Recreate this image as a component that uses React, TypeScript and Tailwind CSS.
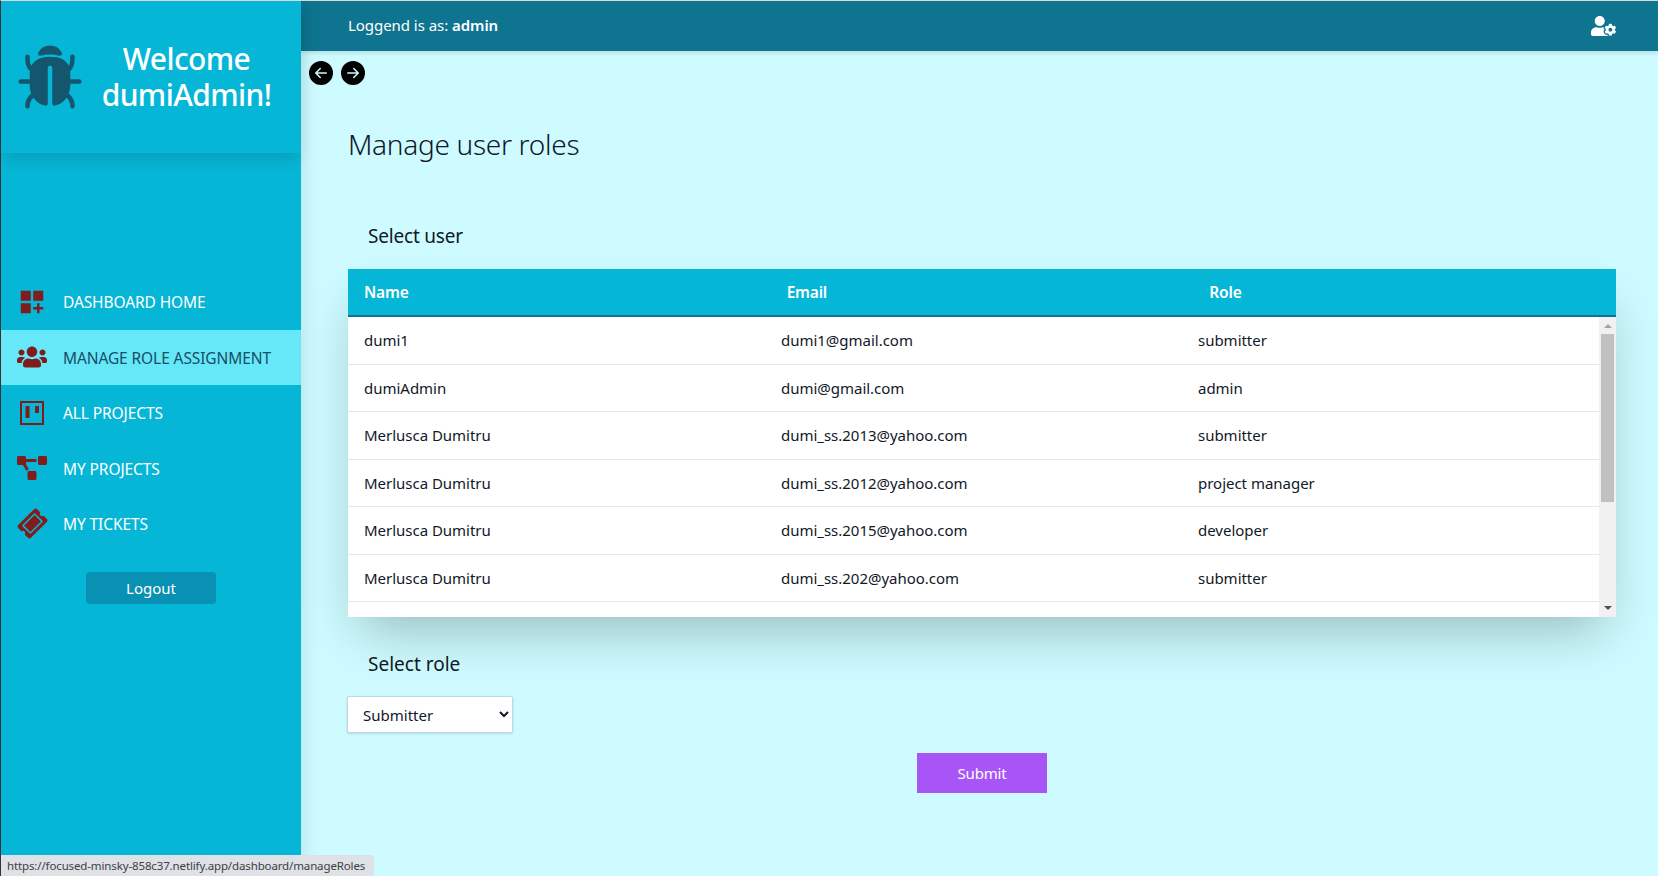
import { FaUsers, FaProjectDiagram, FaTicketAlt, FaUserCog } from "react-icons/fa";
import { MdDashboardCustomize } from "react-icons/md";
import { IoBug } from "react-icons/io5";
import { BsArrowLeftCircleFill, BsArrowRightCircleFill } from "react-icons/bs";

const nav = [
  { label: "DASHBOARD HOME", icon: <MdDashboardCustomize className="w-[30px] h-[30px]" /> },
  { label: "MANAGE ROLE ASSIGNMENT", icon: <FaUsers className="w-[30px] h-[30px]" />, active: true },
  {
    label: "ALL PROJECTS",
    icon: (
      <svg viewBox="0 0 24 24" className="w-[24px] h-[24px]">
        <rect x="1" y="1" width="22" height="22" fill="none" stroke="currentColor" strokeWidth="2" />
        <rect x="5.5" y="5" width="4" height="12" fill="currentColor" />
        <rect x="15" y="5" width="4" height="7" fill="currentColor" />
      </svg>
    ),
  },
  { label: "MY PROJECTS", icon: <FaProjectDiagram className="w-[30px] h-[30px]" /> },
  { label: "MY TICKETS", icon: <FaTicketAlt className="w-[27px] h-[27px] -rotate-45" /> },
];

const users = [
  ["dumi1", "dumi1@gmail.com", "submitter"],
  ["dumiAdmin", "dumi@gmail.com", "admin"],
  ["Merlusca Dumitru", "dumi_ss.2013@yahoo.com", "submitter"],
  ["Merlusca Dumitru", "dumi_ss.2012@yahoo.com", "project manager"],
  ["Merlusca Dumitru", "dumi_ss.2015@yahoo.com", "developer"],
  ["Merlusca Dumitru", "dumi_ss.202@yahoo.com", "submitter"],
];

export default function App() {
  return (
    <div className="relative h-screen w-full overflow-hidden flex border-t border-t-[#d9d9d9] border-l border-l-[#333333] bg-[#cdfbff] font-['Noto_Sans',sans-serif] text-[#111827]">
      <aside className="relative z-20 w-[300px] shrink-0 bg-[#06b6d6] shadow-[0_0_20px_rgba(0,0,0,0.12)] flex flex-col">
        <div className="h-[152px] flex items-center pl-[13px] shadow-[0_10px_15px_-3px_rgba(0,0,0,0.12)]">
          <IoBug className="w-[72px] h-[72px] text-[#14566e] shrink-0" />
          <div className="flex-1 text-center text-white text-[30px] leading-[36px] font-medium tracking-[-0.6px] pr-[14px]">
            Welcome<br />dumiAdmin!
          </div>
        </div>
        <nav className="mt-[121px] flex flex-col">
          {nav.map((n) => (
            <div key={n.label} className={`h-[55.5px] flex items-center ${n.active ? "bg-[#67e8f9] text-[#164e63]" : "text-white"}`}>
              <span className="w-[62px] flex justify-center text-[#7f1d1d]">{n.icon}</span>
              <span className="pt-[2px] text-[15.5px] tracking-[-0.1px] whitespace-nowrap">{n.label}</span>
            </div>
          ))}
        </nav>
        <button className="mt-[20px] ml-[85px] w-[130px] h-[32px] rounded bg-[#0891b2] text-white text-[15px] pt-[1px]">Logout</button>
      </aside>

      <main className="flex-1 min-w-0 flex flex-col">
        <header className="h-[50px] shrink-0 bg-[#0e7490] text-white flex items-center justify-between pl-[47px] pr-[42px] shadow-[0_2px_4px_rgba(0,0,0,0.12)] text-[15px]">
          <span className="tracking-[-0.05px] -mt-[2px]">Loggend is as: <b className="font-semibold">admin</b></span>
          <FaUserCog className="w-[25px] h-[20px]" />
        </header>
        <div className="flex gap-[8px] pl-[8px] pt-[10px]">
          <BsArrowLeftCircleFill className="w-[24px] h-[24px] text-black" />
          <BsArrowRightCircleFill className="w-[24px] h-[24px] text-black" />
        </div>
        <div className="pl-[47px] pr-[42px]">
          <h1 className="mt-[39px] text-[28px] leading-[40px] font-light text-[#0f172a] tracking-[-0.3px]">Manage user roles</h1>
          <h2 className="mt-[58px] ml-[20px] text-[19px] leading-[28px] tracking-[-0.2px]">Select user</h2>
          <div className="mt-[19px] shadow-2xl">
            <div className="grid grid-cols-3 h-[48px] items-center bg-[#06b6d6] border-b-2 border-b-[#0e7490] text-white text-[15.5px] font-semibold tracking-[-0.2px] pt-[2px]">
              <div className="pl-[16px]">Name</div>
              <div className="pl-[16px]">Email</div>
              <div className="pl-[16px]">Role</div>
            </div>
            <div className="flex h-[300px] bg-white">
              <div className="flex-1 min-w-0 overflow-hidden">
                {users.map((u, i) => (
                  <div key={i} className="grid grid-cols-3 h-[47.5px] items-center border-b border-b-[#e5e7eb] text-[15px] tracking-[-0.02px]">
                    {u.map((c, j) => <div key={j} className="pl-[16px]">{c}</div>)}
                  </div>
                ))}
              </div>
              <div className="w-[17px] shrink-0 bg-[#f1f1f1] flex flex-col items-center">
                <svg viewBox="0 0 8 4" className="w-[8px] h-[4px] mt-[7px] mb-[6px] shrink-0"><path d="M4 0 8 4H0z" fill="#a3a3a3" /></svg>
                <div className="w-[13px] h-[168px] bg-[#c1c1c1]" />
                <svg viewBox="0 0 8 4" className="w-[8px] h-[4px] mt-auto mb-[7px] shrink-0"><path d="M0 0H8L4 4z" fill="#505050" /></svg>
              </div>
            </div>
          </div>
          <h2 className="mt-[33px] ml-[20px] text-[19px] leading-[28px]">Select role</h2>
          <select defaultValue="Submitter" className="mt-[18px] -ml-[1px] block w-[166px] h-[37px] pl-[11px] bg-white rounded-[2px] border border-[#bcd8e4] text-[15px] text-[#111827] shadow-sm">
            <option>Submitter</option>
            <option>Developer</option>
            <option>Project manager</option>
            <option>Admin</option>
          </select>
          <div className="flex justify-center">
            <button className="mt-[20px] w-[130px] h-[40px] bg-[#a855f7] text-white text-[15px] tracking-[-0.2px]">Submit</button>
          </div>
        </div>
      </main>

      <div className="absolute z-30 left-0 bottom-0 h-[21px] w-[373px] bg-[#dee1e6] rounded-tr-[3px] pl-[6px] flex items-center text-[11.5px] text-[#3c4043] tracking-[-0.13px] whitespace-nowrap">
        https://focused-minsky-858c37.netlify.app/dashboard/manageRoles
      </div>
    </div>
  );
}
